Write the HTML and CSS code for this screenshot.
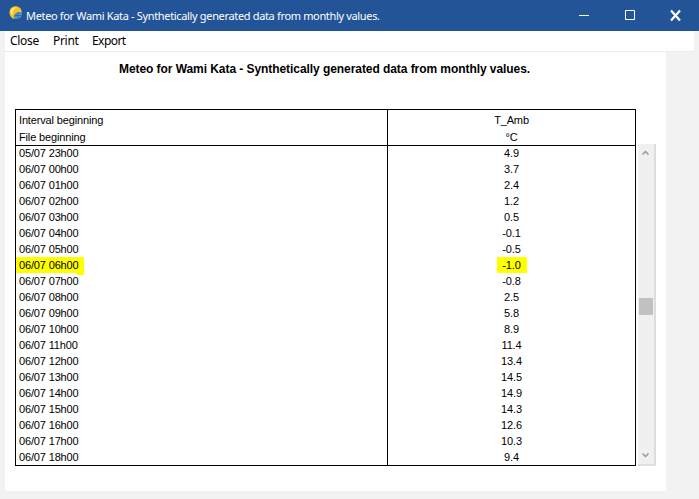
FILE: index.html
```html
<!DOCTYPE html>
<html lang="en">
<head>
<meta charset="utf-8">
<title>Meteo for Wami Kata</title>
<link rel="stylesheet" href="styles.css">
</head>
<body>
<header class="titlebar">
  <svg class="logo" width="14" height="14" viewBox="0 0 14 14">
    <path d="M6.500 .3C2.500 .3 .3 3.500 .5 7C.7 10 2.500 12.300 5 13C4.500 8.500 7 5.500 12.800 6C12.500 2.500 10 .3 6.500 .3Z" fill="#f8c020"/>
    <path d="M1.500 6C1.500 3 4 1 7.500 1.500C4.500 3 3.500 5.500 3.500 9Q1.500 8 1.500 6Z" fill="#fde98a"/>
    <path d="M12.900 6C8 5.500 5 8 5 13C10 13.500 13.500 11.500 12.900 6Z" fill="#4a98c8"/>
    <path d="M6 9.500H12.500M9 6.500V13" stroke="#28609c" stroke-width=".7"/>
  </svg>
  <span class="caption">Meteo for Wami Kata - Synthetically generated data from monthly values.</span>
  <svg class="controls" width="110" height="31" viewBox="0 0 110 31" fill="none" stroke="#fff">
    <path d="M3 15.500H13"/>
    <path d="M49.500 10.500H58.500V19.500H49.500Z"/>
    <path d="M95 10.500L104 20.500M104 10.500L95 20.500" stroke-width="2.200"/>
  </svg>
</header>
<nav class="menu"><span class="close">Close</span><span class="print">Print</span><span class="export">Export</span></nav>
<main class="panel">
  <h1>Meteo for Wami Kata - Synthetically generated data from monthly values.</h1>
  <div class="grid-area">
    <div class="table">
      <div class="head"><div class="c1">Interval beginning<br>File beginning</div><div class="c2">T_Amb<br>°C</div></div>
      <div class="row"><div class="c1">05/07 23h00</div><div class="c2">4.9</div></div>
      <div class="row"><div class="c1">06/07 00h00</div><div class="c2">3.7</div></div>
      <div class="row"><div class="c1">06/07 01h00</div><div class="c2">2.4</div></div>
      <div class="row"><div class="c1">06/07 02h00</div><div class="c2">1.2</div></div>
      <div class="row"><div class="c1">06/07 03h00</div><div class="c2">0.5</div></div>
      <div class="row"><div class="c1">06/07 04h00</div><div class="c2">-0.1</div></div>
      <div class="row"><div class="c1">06/07 05h00</div><div class="c2">-0.5</div></div>
      <div class="row"><div class="c1"><span class="mark">06/07 06h00</span></div><div class="c2"><span class="mark">-1.0</span></div></div>
      <div class="row"><div class="c1">06/07 07h00</div><div class="c2">-0.8</div></div>
      <div class="row"><div class="c1">06/07 08h00</div><div class="c2">2.5</div></div>
      <div class="row"><div class="c1">06/07 09h00</div><div class="c2">5.8</div></div>
      <div class="row"><div class="c1">06/07 10h00</div><div class="c2">8.9</div></div>
      <div class="row"><div class="c1">06/07 11h00</div><div class="c2">11.4</div></div>
      <div class="row"><div class="c1">06/07 12h00</div><div class="c2">13.4</div></div>
      <div class="row"><div class="c1">06/07 13h00</div><div class="c2">14.5</div></div>
      <div class="row"><div class="c1">06/07 14h00</div><div class="c2">14.9</div></div>
      <div class="row"><div class="c1">06/07 15h00</div><div class="c2">14.3</div></div>
      <div class="row"><div class="c1">06/07 16h00</div><div class="c2">12.6</div></div>
      <div class="row"><div class="c1">06/07 17h00</div><div class="c2">10.3</div></div>
      <div class="row"><div class="c1">06/07 18h00</div><div class="c2">9.4</div></div>
    </div>
    <div class="scrollbar">
      <svg width="16" height="16" viewBox="0 0 16 16"><path d="M4.500 10.500L7.500 7.500L10.500 10.500" fill="none" stroke="#999" stroke-width="1.500"/></svg>
      <div class="thumb"></div>
      <svg class="down" width="16" height="16" viewBox="0 0 16 16"><path d="M4.500 5.500L7.500 8.500L10.500 5.500" fill="none" stroke="#999" stroke-width="1.500"/></svg>
    </div>
  </div>
</main>
</body>
</html>
```
FILE: styles.css
```css
* { box-sizing: border-box; }
body {
  margin: 0;
  height: 499px;
  overflow: hidden;
  background: #f2f2f2;
  color: #000;
  font-family: "Liberation Sans", Arial, sans-serif;
}
.titlebar {
  display: flex;
  height: 31px;
  background: #245498;
  color: #fff;
}
.logo { margin: 6px 0 0 9px; }
.caption {
  margin-left: 3px;
  font: 11px/31px "Noto Sans", sans-serif;
  letter-spacing: -0.34px;
  white-space: nowrap;
}
.controls { margin-left: auto; margin-right: 13px; }
.menu {
  display: flex;
  height: 21px;
  margin: 0 5px;
  padding-left: 5px;
  background: #fff;
  border-bottom: 1px solid #ececec;
  font: 12px/20px "Noto Sans", sans-serif;
  letter-spacing: -0.3px;
}
.menu span { width: 43px; }
.menu .print { width: 39px; }
.menu .export { letter-spacing: -0.55px; }
.panel {
  width: 661px;
  height: 439px;
  margin-left: 5px;
  padding: 9px 0 0 10px;
  background: #fff;
}
h1 {
  margin: 0 0 32px 104px;
  font-size: 12px;
  line-height: 16px;
  letter-spacing: -0.065px;
  white-space: nowrap;
}
.grid-area { display: flex; align-items: flex-end; }
.table {
  width: 621px;
  height: 357px;
  border: 1px solid #000;
  font-size: 11px;
  letter-spacing: -0.15px;
  background: linear-gradient(#000, #000) 371px 0 / 1px 100% no-repeat;
}
.head, .row { display: grid; grid-template-columns: 371px 249px; }
.head {
  height: 36px;
  margin-bottom: -1px;
  padding-top: 2px;
  line-height: 17px;
  border-bottom: 1px solid #000;
}
.row { height: 16px; line-height: 16px; }
.c1 { padding-left: 3px; }
.c2 { text-align: center; }
.mark { display: inline-block; height: 16px; background: #ff0; }
.c1 .mark {
  width: 68px;
  height: 18px;
  margin-left: -3px;
  padding-left: 3px;
  background:
    linear-gradient(#ff0, #ff0) 0 0 / 68px 16px no-repeat,
    linear-gradient(#ff0, #ff0) 61px 0 / 7px 18px no-repeat;
}
.c2 .mark { width: 30px; }
.scrollbar {
  display: flex;
  flex-direction: column;
  width: 18px;
  height: 322px;
  margin-left: 2px;
  background: #f0f0f0;
  border-right: 2px solid #dcdcdc;
  border-bottom: 2px solid #e0e0e0;
}
.thumb {
  width: 14px;
  height: 17px;
  margin: 138px 0 0 1px;
  background: #c1c1c1;
}
.down { margin-top: auto; }
```
